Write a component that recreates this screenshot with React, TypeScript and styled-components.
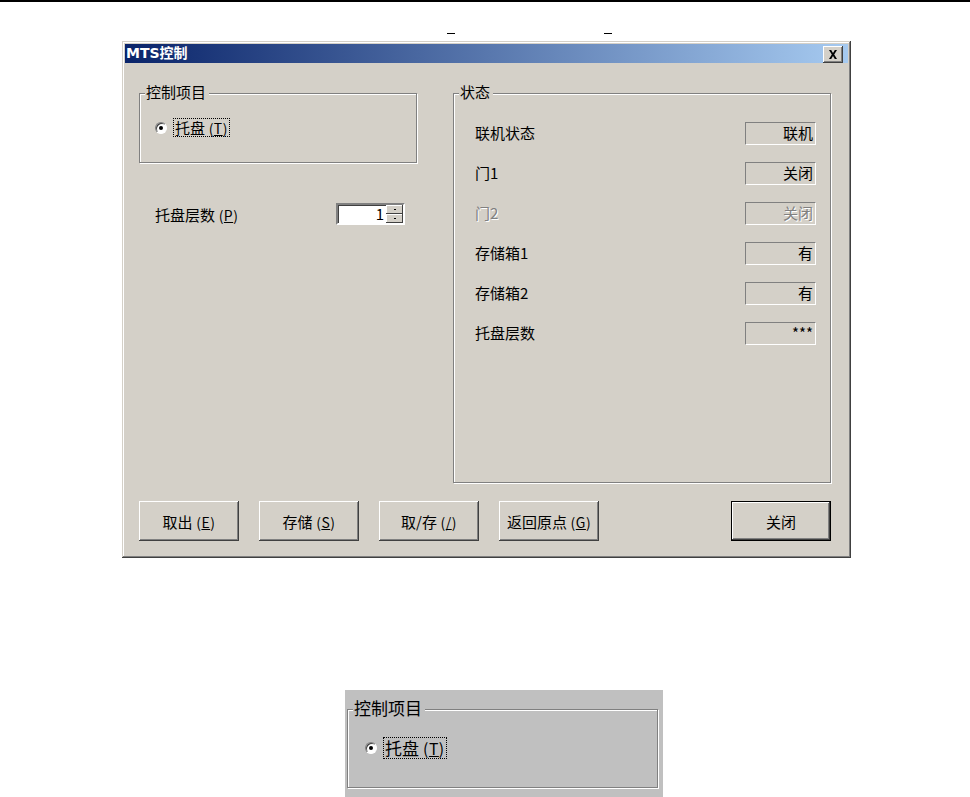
import React from 'react';
import styled, {createGlobalStyle} from "styled-components";

const face = '#d4d0c8'

const GlobalStyle = createGlobalStyle`
  body {
    margin: 0;
    background: #ffffff;
    font-family: "Noto Sans CJK SC", "DejaVu Sans", sans-serif;
    font-size: 15px;
    color: #000000;
  }
`

const Page = styled.div`
  width: 970px;
  height: 797px;
  overflow: hidden;
`

const TopRule = styled.div`
  height: 2px;
  background: #000000;
`

const Marks = styled.div`
  height: 39px;
  display: flex;
  align-items: flex-end;
  gap: 149px;
  padding-left: 447px;
  box-sizing: border-box;
`

const Mark = styled.span`
  width: 8px;
  height: 1px;
  margin-bottom: 7px;
  background: #000000;
`

const Dialog = styled.div`
  margin-left: 122px;
  width: 729px;
  padding: 3px;
  box-sizing: border-box;
  background: ${face};
  box-shadow: inset -1px -1px 0 #404040, inset 1px 1px 0 ${face},
    inset -2px -2px 0 #808080, inset 2px 2px 0 #ffffff;
`

const TitleBar = styled.div`
  height: 19px;
  display: flex;
  align-items: center;
  justify-content: space-between;
  padding: 0 5px 0 1px;
  background: linear-gradient(to right, #0a246a, #a6caf0);
`

const Title = styled.span`
  color: #ffffff;
  font-family: "DejaVu Sans", "Noto Sans CJK SC", sans-serif;
  font-weight: bold;
  font-size: 14px;
  line-height: 19px;
`

const CloseBox = styled.div`
  width: 20px;
  height: 17px;
  margin-top: 1px;
  display: flex;
  align-items: center;
  justify-content: center;
  background: ${face};
  box-shadow: inset -1px -1px 0 #404040, inset 1px 1px 0 #ffffff,
    inset -2px -2px 0 #808080;
`

const Body = styled.div`
  padding: 30px 17px 14px 14px;
`

const Columns = styled.div`
  display: grid;
  grid-template-columns: 278px 378px;
  column-gap: 36px;
`

const LeftColumn = styled.div`
  display: flex;
  flex-direction: column;
`

type GroupProps = {
    height: number
}

const GroupBox = styled.div<GroupProps>`
  position: relative;
  height: ${(props) => props.height}px;
  box-sizing: border-box;
  border: 1px solid #808080;
  box-shadow: inset 1px 1px 0 #ffffff, 1px 1px 0 #ffffff;
`

type LegendProps = {
    size?: number
    bg?: string
}

const Legend = styled.span<LegendProps>`
  position: absolute;
  top: ${(props) => -Math.round((props.size || 15) * 0.72)}px;
  left: 5px;
  padding: 0 3px 0 1px;
  background: ${(props) => props.bg || face};
  font-size: ${(props) => props.size || 15}px;
  line-height: 1.2;
`

const RadioRow = styled.div<{ pad: number, top: number }>`
  display: flex;
  align-items: center;
  gap: 7px;
  padding: ${(props) => props.top}px 0 0 ${(props) => props.pad}px;
`

const RadioDot = styled.span`
  position: relative;
  width: 12px;
  height: 12px;
  box-sizing: border-box;
  border-radius: 50%;
  background: #ffffff;
  border: 1px solid;
  border-color: #808080 #ffffff #ffffff #808080;
  box-shadow: inset 1px 1px 0 #404040;

  &::after {
    content: "";
    position: absolute;
    left: 3px;
    top: 3px;
    width: 4px;
    height: 4px;
    border-radius: 50%;
    background: #000000;
  }
`

const FocusLabel = styled.span<{ size?: number }>`
  outline: 1px dotted #000000;
  padding: 0 1px;
  font-size: ${(props) => props.size || 15}px;
  line-height: 1.15;
`

const Key = styled.span`
  text-decoration: underline;
  text-underline-offset: 1px;
`

const Mnemonic = styled.span`
  font-size: 0.93em;
  letter-spacing: 0.5px;
`

const SpinRow = styled.div`
  margin-top: 40px;
  display: flex;
  align-items: center;
  justify-content: space-between;
  padding: 0 12px 0 16px;
`

const Spinner = styled.div`
  width: 69px;
  height: 22px;
  box-sizing: border-box;
  display: flex;
  background: #ffffff;
  border: 2px solid;
  border-color: #808080 #ffffff #ffffff #808080;
  box-shadow: inset 1px 1px 0 #404040;
`

const SpinValue = styled.span`
  flex: 1;
  text-align: right;
  padding-right: 2px;
  font-size: 15px;
  line-height: 18px;
`

const SpinButtons = styled.div`
  width: 17px;
  display: flex;
  flex-direction: column;
`

const SpinButton = styled.div`
  flex: 1;
  display: flex;
  align-items: center;
  justify-content: center;
  background: ${face};
  box-shadow: inset -1px -1px 0 #404040, inset 1px 1px 0 #ffffff;

  &::after {
    content: "";
    width: 2px;
    height: 1px;
    background: #000000;
  }
`

const StatusList = styled.div`
  display: flex;
  flex-direction: column;
  gap: 17px;
  padding: 28px 14px 0 21px;
`

const StatusRow = styled.div`
  display: flex;
  align-items: center;
  justify-content: space-between;
  height: 23px;
`

type DisabledProps = {
    disabled?: boolean
}

const StatusLabel = styled.span<DisabledProps>`
  margin-top: -2px;
  color: ${(props) => props.disabled ? '#808080' : '#000000'};
  text-shadow: ${(props) => props.disabled ? '1px 1px 0 #ffffff' : 'none'};
`

const StatusValue = styled.span<DisabledProps>`
  width: 71px;
  height: 23px;
  box-sizing: border-box;
  border: 1px solid;
  border-color: #808080 #ffffff #ffffff #808080;
  text-align: right;
  padding-right: 2px;
  line-height: 20px;
  color: ${(props) => props.disabled ? '#808080' : '#000000'};
  text-shadow: ${(props) => props.disabled ? '1px 1px 0 #ffffff' : 'none'};
`

const ButtonBar = styled.div`
  margin-top: 18px;
  display: flex;
  gap: 20px;
`

type ButtonProps = {
    isDefault?: boolean
}

const Button = styled.div<ButtonProps>`
  width: 100px;
  height: 40px;
  box-sizing: border-box;
  display: flex;
  align-items: center;
  justify-content: center;
  margin-left: ${(props) => props.isDefault ? 'auto' : '0'};
  background: ${face};
  border: ${(props) => props.isDefault ? '1px solid #000000' : 'none'};
  box-shadow: inset -1px -1px 0 #404040, inset 1px 1px 0 #ffffff,
    inset -2px -2px 0 #808080, inset 2px 2px 0 ${face};
`

const Snippet = styled.div`
  margin: 132px 0 0 345px;
  width: 318px;
  height: 110px;
  box-sizing: border-box;
  padding: 19px 5px 0 2px;
  background: #c0c0c0;
`

const statusRows = [
    {label: '联机状态', value: '联机'},
    {label: '门1', value: '关闭'},
    {label: '门2', value: '关闭', disabled: true},
    {label: '存储箱1', value: '有'},
    {label: '存储箱2', value: '有'},
    {label: '托盘层数', value: '***'},
]

const buttons = [
    {text: '取出', key: 'E'},
    {text: '存储', key: 'S'},
    {text: '取/存', key: '/'},
    {text: '返回原点', key: 'G'},
]

const Accel = (props: { k: string }) => (
    <Mnemonic> (<Key>{props.k}</Key>)</Mnemonic>
)

export default function App() {
    return (
        <Page>
            <GlobalStyle/>
            <TopRule/>
            <Marks>
                <Mark/>
                <Mark/>
            </Marks>
            <Dialog>
                <TitleBar>
                    <Title>MTS控制</Title>
                    <CloseBox>
                        <svg width="10" height="9" viewBox="0 0 10 9">
                            <path d="M1 0h2.2l1.8 3 1.8-3H9L6.2 4.5 9 9H6.8L5 6 3.2 9H1l2.8-4.5z" fill="#000"/>
                        </svg>
                    </CloseBox>
                </TitleBar>
                <Body>
                    <Columns>
                        <LeftColumn>
                            <GroupBox height={70}>
                                <Legend>控制项目</Legend>
                                <RadioRow pad={15} top={25}>
                                    <RadioDot/>
                                    <FocusLabel>托盘<Accel k="T"/></FocusLabel>
                                </RadioRow>
                            </GroupBox>
                            <SpinRow>
                                <span>托盘层数<Accel k="P"/></span>
                                <Spinner>
                                    <SpinValue>1</SpinValue>
                                    <SpinButtons>
                                        <SpinButton/>
                                        <SpinButton/>
                                    </SpinButtons>
                                </Spinner>
                            </SpinRow>
                        </LeftColumn>
                        <GroupBox height={390}>
                            <Legend>状态</Legend>
                            <StatusList>
                                {statusRows.map((row) => (
                                    <StatusRow key={row.label}>
                                        <StatusLabel disabled={row.disabled}>{row.label}</StatusLabel>
                                        <StatusValue disabled={row.disabled}>{row.value}</StatusValue>
                                    </StatusRow>
                                ))}
                            </StatusList>
                        </GroupBox>
                    </Columns>
                    <ButtonBar>
                        {buttons.map((b) => (
                            <Button key={b.key}><span>{b.text}<Accel k={b.key}/></span></Button>
                        ))}
                        <Button isDefault>关闭</Button>
                    </ButtonBar>
                </Body>
            </Dialog>
            <Snippet>
                <GroupBox height={79}>
                    <Legend size={17} bg="#c0c0c0">控制项目</Legend>
                    <RadioRow pad={17} top={28}>
                        <RadioDot/>
                        <FocusLabel size={17}>托盘<Accel k="T"/></FocusLabel>
                    </RadioRow>
                </GroupBox>
            </Snippet>
        </Page>
    );
}
